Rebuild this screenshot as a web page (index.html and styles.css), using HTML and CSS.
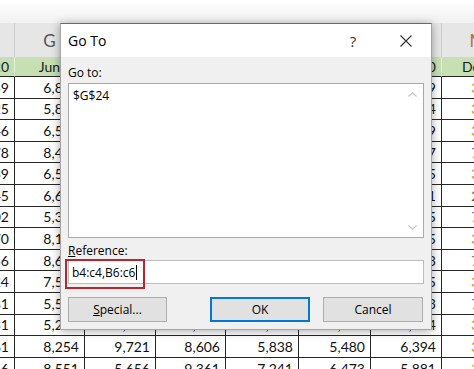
FILE: index.html
```html
<!DOCTYPE html>
<html>
<head>
<meta charset="utf-8">
<link rel="stylesheet" href="styles.css">
</head>
<body>
<div class="topstrip"></div>
<div class="sheet">
  <div class="row hdr">
    <div class="cell">F</div><div class="cell">G</div><div class="cell">H</div><div class="cell">I</div><div class="cell">J</div><div class="cell">K</div><div class="cell">L</div><div class="cell hl">M</div>
  </div>
  <div class="row green">
    <div class="cell">2020</div><div class="cell c">Jun</div><div class="cell c">Jul</div><div class="cell c">Aug</div><div class="cell c">Sep</div><div class="cell c">Oct</div><div class="cell">Nov 2020</div><div class="cell l">Dec</div>
  </div>
  <div class="row data"><div class="cell">3,459</div><div class="cell">6,812</div><div class="cell">7,233</div><div class="cell">5,904</div><div class="cell">8,115</div><div class="cell">6,270</div><div class="cell">4,589</div><div class="cell m or">3,512</div></div>
  <div class="row data"><div class="cell">5,125</div><div class="cell">5,834</div><div class="cell">9,102</div><div class="cell">6,441</div><div class="cell">7,390</div><div class="cell">8,013</div><div class="cell">6,924</div><div class="cell m or">3,208</div></div>
  <div class="row data"><div class="cell">7,346</div><div class="cell">6,527</div><div class="cell">5,671</div><div class="cell">8,220</div><div class="cell">6,083</div><div class="cell">9,115</div><div class="cell">5,309</div><div class="cell m or">3,774</div></div>
  <div class="row data"><div class="cell">8,178</div><div class="cell">8,463</div><div class="cell">6,350</div><div class="cell">7,712</div><div class="cell">5,940</div><div class="cell">6,487</div><div class="cell">8,207</div><div class="cell m gr">7,145</div></div>
  <div class="row data"><div class="cell">6,239</div><div class="cell">6,558</div><div class="cell">7,804</div><div class="cell">5,316</div><div class="cell">9,027</div><div class="cell">7,648</div><div class="cell">7,665</div><div class="cell m or">3,921</div></div>
  <div class="row data"><div class="cell">9,345</div><div class="cell">6,601</div><div class="cell">8,432</div><div class="cell">6,995</div><div class="cell">5,208</div><div class="cell">8,760</div><div class="cell">5,231</div><div class="cell m br">2,603</div></div>
  <div class="row data"><div class="cell">4,502</div><div class="cell">5,388</div><div class="cell">6,119</div><div class="cell">9,054</div><div class="cell">7,473</div><div class="cell">5,882</div><div class="cell">6,845</div><div class="cell m gr">7,310</div></div>
  <div class="row data"><div class="cell">5,770</div><div class="cell">8,147</div><div class="cell">7,560</div><div class="cell">6,238</div><div class="cell">8,691</div><div class="cell">9,304</div><div class="cell">8,915</div><div class="cell m or">3,060</div></div>
  <div class="row data"><div class="cell">7,456</div><div class="cell">8,609</div><div class="cell">5,947</div><div class="cell">7,381</div><div class="cell">6,520</div><div class="cell">5,173</div><div class="cell">5,503</div><div class="cell m gr">7,882</div></div>
  <div class="row data"><div class="cell">8,624</div><div class="cell">7,513</div><div class="cell">9,286</div><div class="cell">8,047</div><div class="cell">5,769</div><div class="cell">6,932</div><div class="cell">9,485</div><div class="cell m or">3,447</div></div>
  <div class="row data"><div class="cell">6,081</div><div class="cell">5,542</div><div class="cell">6,873</div><div class="cell">5,690</div><div class="cell">9,412</div><div class="cell">7,055</div><div class="cell">7,263</div><div class="cell m gr">7,019</div></div>
  <div class="row data"><div class="cell">5,931</div><div class="cell">5,276</div><div class="cell">8,014</div><div class="cell">9,528</div><div class="cell">6,346</div><div class="cell">8,419</div><div class="cell">6,124</div><div class="cell m or">3,630</div></div>
  <div class="row data"><div class="cell">9,561</div><div class="cell">8,254</div><div class="cell">9,721</div><div class="cell">8,606</div><div class="cell">5,838</div><div class="cell">5,480</div><div class="cell">6,394</div><div class="cell m or">3,115</div></div>
  <div class="row data"><div class="cell">7,216</div><div class="cell">8,551</div><div class="cell">5,656</div><div class="cell">9,361</div><div class="cell">7,241</div><div class="cell">6,473</div><div class="cell">5,881</div><div class="cell m ye">2,968</div></div>
</div>

<div class="dialog">
  <div class="titlebar">
    <span class="title">Go To</span>
    <span class="help">?</span>
    <span class="close"><svg width="12" height="12" viewBox="0 0 12 12"><path d="M0.5 0.5 L11.5 11.5 M11.5 0.5 L0.5 11.5" stroke="#333" stroke-width="1.1" fill="none"/></svg></span>
  </div>
  <div class="body">
    <div class="label">Go to:</div>
    <div class="list">
      <div class="item">$G$24</div>
      <div class="scroll">
        <svg width="9" height="5" viewBox="0 0 9 5"><path d="M0.5 4.5 L4.5 0.8 L8.5 4.5" stroke="#c3c3c3" stroke-width="1.2" fill="none"/></svg>
        <svg width="9" height="5" viewBox="0 0 9 5"><path d="M0.5 0.5 L4.5 4.2 L8.5 0.5" stroke="#c3c3c3" stroke-width="1.2" fill="none"/></svg>
      </div>
    </div>
    <div class="label ref"><u>R</u>eference:</div>
    <div class="textbox">
      <span class="value">b4:c4,B6:c6</span><span class="caret"></span>
      <div class="mark"></div>
    </div>
    <div class="buttons">
      <button class="btn special"><u>S</u>pecial...</button>
      <span class="spacer"></span>
      <button class="btn ok">OK</button>
      <button class="btn cancel">Cancel</button>
    </div>
  </div>
</div>
</body>
</html>
```

FILE: styles.css
```css
body {
  margin: 0;
  width: 474px;
  height: 369px;
  overflow: hidden;
  position: relative;
  background: #fff;
  font-family: Lato, "Liberation Sans", sans-serif;
}

.topstrip {
  height: 23px;
  background: linear-gradient(#ffffff, #f1f1f1);
}

.row {
  display: grid;
  grid-template-columns: 70px 70px 71px 70px 73px 72px 71px 72px;
  margin-left: -55px;
  width: 549px;
}

.cell {
  box-sizing: border-box;
  border-right: 1px solid #262626;
  border-bottom: 1px solid #262626;
  padding: 0 5px;
  white-space: nowrap;
  overflow: hidden;
  font-size: 14px;
  color: #111;
  display: flex;
  align-items: center;
  justify-content: flex-end;
}

.hdr {
  height: 34px;
  background: #e6e6e6;
}
.hdr .cell {
  border-bottom: none;
  border-right: 1px solid #cdcdcd;
  justify-content: center;
  font-size: 17px;
  color: #555;
}
.hdr .cell.hl { color: #a8702e; }

.green {
  height: 20px;
  background: #c6e0b4;
}
.green .cell {
  border-right: 1px solid #e4efdc;
  color: #1a1a1a;
}
.green .cell.c { justify-content: center; }
.green .cell.l { justify-content: flex-start; padding-left: 20px; }

.data { height: 21.6px; }

.cell.m { padding-right: 6px; }
.cell.or { color: #c9852c; }
.cell.gr { color: #7a7a7a; }
.cell.br { color: #8e4a1c; }
.cell.ye { color: #d9a23a; }

/* Dialog */
.dialog {
  position: absolute;
  left: 60px;
  top: 23px;
  width: 372px;
  height: 307px;
  box-sizing: border-box;
  border: 1px solid #a4a4a4;
  border-top: 1px solid #6a6a6a;
  background: #f0f0f0;
  box-shadow: 0 1px 9px rgba(0, 0, 0, 0.35);
  display: flex;
  flex-direction: column;
  font-family: "Open Sans", "Noto Sans", sans-serif;
  color: #000;
}

.titlebar {
  height: 33px;
  background: #fff;
  display: flex;
  align-items: center;
}
.title {
  flex: 1;
  padding-left: 7px;
  font-size: 14px;
}
.help {
  width: 30px;
  text-align: center;
  font-size: 15px;
  color: #333;
}
.close {
  width: 30px;
  margin-left: 23px;
  margin-right: 10px;
  display: flex;
  justify-content: center;
}

.body {
  flex: 1;
  padding: 9px 7px 0;
  display: flex;
  flex-direction: column;
}

.label {
  font-size: 12px;
  line-height: 14px;
  height: 14px;
}

.list {
  margin-top: 3px;
  height: 155px;
  box-sizing: border-box;
  border: 1px solid #a9a9a9;
  background: #fff;
  display: flex;
}
.item {
  flex: 1;
  padding: 4px 4px 0;
  font-size: 12px;
  line-height: 16px;
}
.scroll {
  width: 21px;
  padding: 8px 0 7px;
  display: flex;
  flex-direction: column;
  justify-content: space-between;
  align-items: center;
}

.ref { margin-top: 6px; }

.textbox {
  position: relative;
  margin-top: 2px;
  height: 24px;
  box-sizing: border-box;
  border: 1px solid #bdbdbd;
  background: #fff;
  display: flex;
  align-items: center;
  padding-left: 3px;
  font-size: 12px;
}
.caret {
  width: 1px;
  height: 15px;
  background: #000;
  margin-left: 1px;
}
.mark {
  position: absolute;
  left: -4px;
  top: -2px;
  width: 76px;
  height: 26px;
  border: 2px solid #b8262d;
}

.buttons {
  margin-top: 13px;
  display: flex;
  height: 25px;
}
.spacer { flex: 1; }
.btn {
  box-sizing: border-box;
  height: 25px;
  width: 100px;
  background: #e1e1e1;
  border: 1px solid #adadad;
  font-family: "Open Sans", "Noto Sans", sans-serif;
  font-size: 12px;
  color: #000;
  padding: 0;
}
.btn.special { width: 99px; }
.btn.ok { border: 2px solid #0078d7; }
.btn.cancel { margin-left: 13px; margin-right: 1px; }
```
